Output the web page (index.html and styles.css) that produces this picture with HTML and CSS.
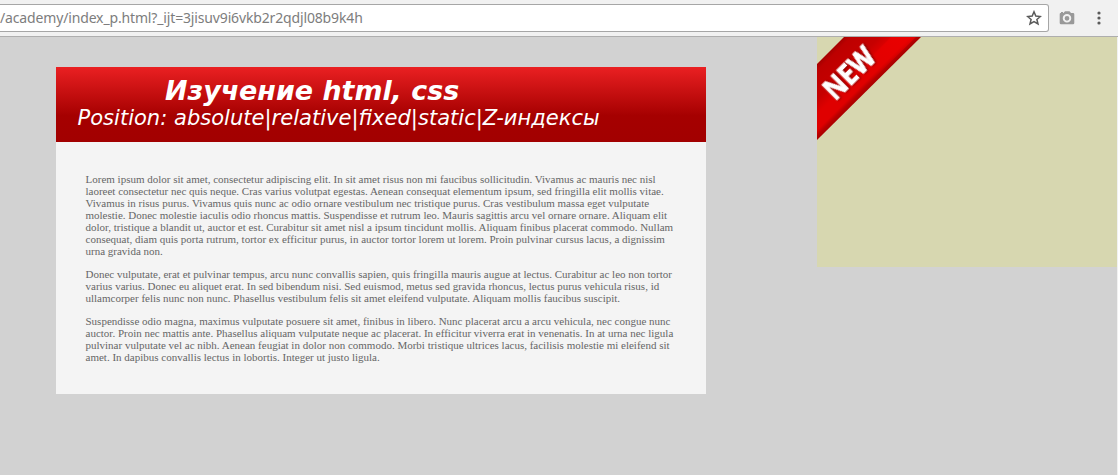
FILE: index.html
```html
<!DOCTYPE html>
<html lang="ru">
<head>
<meta charset="utf-8">
<title>Изучение html, css</title>
<link rel="stylesheet" href="styles.css">
</head>
<body>
<div class="toolbar">
  <div class="address">
    <span class="url">/academy/index_p.html?_ijt=3jisuv9i6vkb2r2qdjl08b9k4h</span>
    <svg class="star" width="16" height="16" viewBox="0 0 16 16"><path d="M8 1.8 9.8 6.1 14.4 6.5 10.9 9.5 12 14 8 11.6 4 14 5.1 9.5 1.6 6.5 6.2 6.1Z" fill="none" stroke="#5a5a5a" stroke-width="1.5"/></svg>
  </div>
  <svg class="camera" width="16" height="14" viewBox="0 0 16 14"><path d="M1.5 2H2V1H4V2H4.5L6 .3H10.5L12 2H14Q15.300 2 15.300 3.300V12Q15.300 13.300 14 13.300H2Q.7 13.300.7 12V3.300Q.7 2 1.500 2Z" fill="#999"/><circle cx="8" cy="7.300" r="3.300" fill="#999" stroke="#f1f1f1" stroke-width="1.900"/></svg>
  <svg class="menu" width="4" height="14" viewBox="0 0 4 14" fill="#5a5a5a"><circle cx="2" cy="2" r="1.600"/><circle cx="2" cy="7" r="1.600"/><circle cx="2" cy="12" r="1.600"/></svg>
</div>
<main class="page">
  <article class="card">
    <header class="banner">
      <h1 class="title">Изучение html, css</h1>
      <p class="subtitle">Position: absolute|relative|fixed|static|Z-индексы</p>
    </header>
    <div class="content">
      <p>Lorem ipsum dolor sit amet, consectetur adipiscing elit. In sit amet risus non mi faucibus sollicitudin. Vivamus ac mauris nec nisl<br>laoreet consectetur nec quis neque. Cras varius volutpat egestas. Aenean consequat elementum ipsum, sed fringilla elit mollis vitae.<br>Vivamus in risus purus. Vivamus quis nunc ac odio ornare vestibulum nec tristique purus. Cras vestibulum massa eget vulputate<br>molestie. Donec molestie iaculis odio rhoncus mattis. Suspendisse et rutrum leo. Mauris sagittis arcu vel ornare ornare. Aliquam elit<br>dolor, tristique a blandit ut, auctor et est. Curabitur sit amet nisl a ipsum tincidunt mollis. Aliquam finibus placerat commodo. Nullam<br>consequat, diam quis porta rutrum, tortor ex efficitur purus, in auctor tortor lorem ut lorem. Proin pulvinar cursus lacus, a dignissim<br>urna gravida non.</p>
      <p>Donec vulputate, erat et pulvinar tempus, arcu nunc convallis sapien, quis fringilla mauris augue at lectus. Curabitur ac leo non tortor<br>varius varius. Donec eu aliquet erat. In sed bibendum nisi. Sed euismod, metus sed gravida rhoncus, lectus purus vehicula risus, id<br>ullamcorper felis nunc non nunc. Phasellus vestibulum felis sit amet eleifend vulputate. Aliquam mollis faucibus suscipit.</p>
      <p>Suspendisse odio magna, maximus vulputate posuere sit amet, finibus in libero. Nunc placerat arcu a arcu vehicula, nec congue nunc<br>auctor. Proin nec mattis ante. Phasellus aliquam vulputate neque ac placerat. In efficitur viverra erat in venenatis. In at urna nec ligula<br>pulvinar vulputate vel ac nibh. Aenean feugiat in dolor non commodo. Morbi tristique ultrices lacus, facilisis molestie mi eleifend sit<br>amet. In dapibus convallis lectus in lobortis. Integer ut justo ligula.</p>
    </div>
  </article>
  <aside class="side">
    <svg class="ribbon" width="105" height="105" viewBox="0 0 105 105">
      <defs>
        <linearGradient id="band" gradientUnits="userSpaceOnUse" x1="14" y1="14" x2="52" y2="52">
          <stop offset="0" stop-color="#a80000"/><stop offset=".08" stop-color="#bd0000"/><stop offset=".45" stop-color="#c60000"/><stop offset=".65" stop-color="#df0000"/><stop offset=".86" stop-color="#df0000"/><stop offset=".93" stop-color="#b80000"/><stop offset="1" stop-color="#a80000"/>
        </linearGradient>
        <linearGradient id="shine" gradientUnits="userSpaceOnUse" x1="50" y1="50" x2="100" y2="0">
          <stop offset="0" stop-color="#f00000" stop-opacity="0"/><stop offset="1" stop-color="#f00000" stop-opacity=".7"/>
        </linearGradient>
      </defs>
      <path d="M27 0H104L0 103V27Z" fill="url(#band)"/>
      <path d="M74 0H99L48 50 40 34Z" fill="url(#shine)"/>
      <text class="new" transform="translate(18.200 64.500) rotate(-45)" textLength="60" lengthAdjust="spacingAndGlyphs">NEW</text>
    </svg>
  </aside>
</main>
</body>
</html>
```
FILE: styles.css
```css
* { box-sizing: border-box; }
body {
  margin: 0;
  height: 475px;
  overflow: hidden;
  background: #f1f1f1;
  display: flex;
  flex-direction: column;
}
.toolbar {
  height: 37px;
  flex: none;
  display: flex;
  align-items: center;
  background: #f1f1f1;
  border-bottom: 1px solid #aeaeae;
}
.address {
  width: 1049px;
  height: 28px;
  display: flex;
  align-items: center;
  justify-content: space-between;
  padding-right: 6px;
  background: #fff;
  border: 1px solid #a6a6a6;
  border-left: 0;
  border-radius: 0 3px 3px 0;
}
.url {
  font: 14px/20px "Noto Sans", sans-serif;
  letter-spacing: -.15px;
  color: #7d7d7d;
  white-space: nowrap;
}
.camera { margin-left: 10px; }
.menu { margin-left: 22px; }
.page {
  width: 1117px;
  flex: 1;
  display: flex;
  align-items: flex-start;
  justify-content: space-between;
  padding-left: 56px;
  background: #d2d2d2;
}
.card {
  width: 650px;
  height: 327px;
  margin-top: 30px;
  background: #f4f4f4;
}
.banner {
  height: 75px;
  padding: 8px 0 0 21.5px;
  color: #fff;
  background: linear-gradient(#ea2022 0%, #a50000 65%, #a20000 100%);
  font-family: "DejaVu Sans", sans-serif;
  font-style: italic;
  white-space: nowrap;
}
.title {
  margin: 0 0 0 87.5px;
  font-size: 26.9px;
  line-height: 31px;
  font-weight: bold;
}
.subtitle {
  margin: 0;
  font-size: 21.05px;
  line-height: 24px;
}
.content {
  padding: 31px 0 0 29.5px;
  color: #666;
  font: 11px/12px "Liberation Serif", serif;
  white-space: nowrap;
}
.content p { margin: 0 0 11px; }
.side {
  width: 300px;
  height: 230px;
  background: #d7d7b0;
}
.ribbon { display: block; overflow: visible; }
.new {
  font: bold 28px "Open Sans", sans-serif;
  fill: #fff;
  stroke: #fff;
  stroke-width: .9px;
  filter: drop-shadow(1px 1px 1px rgba(80, 0, 0, .6));
}
```
